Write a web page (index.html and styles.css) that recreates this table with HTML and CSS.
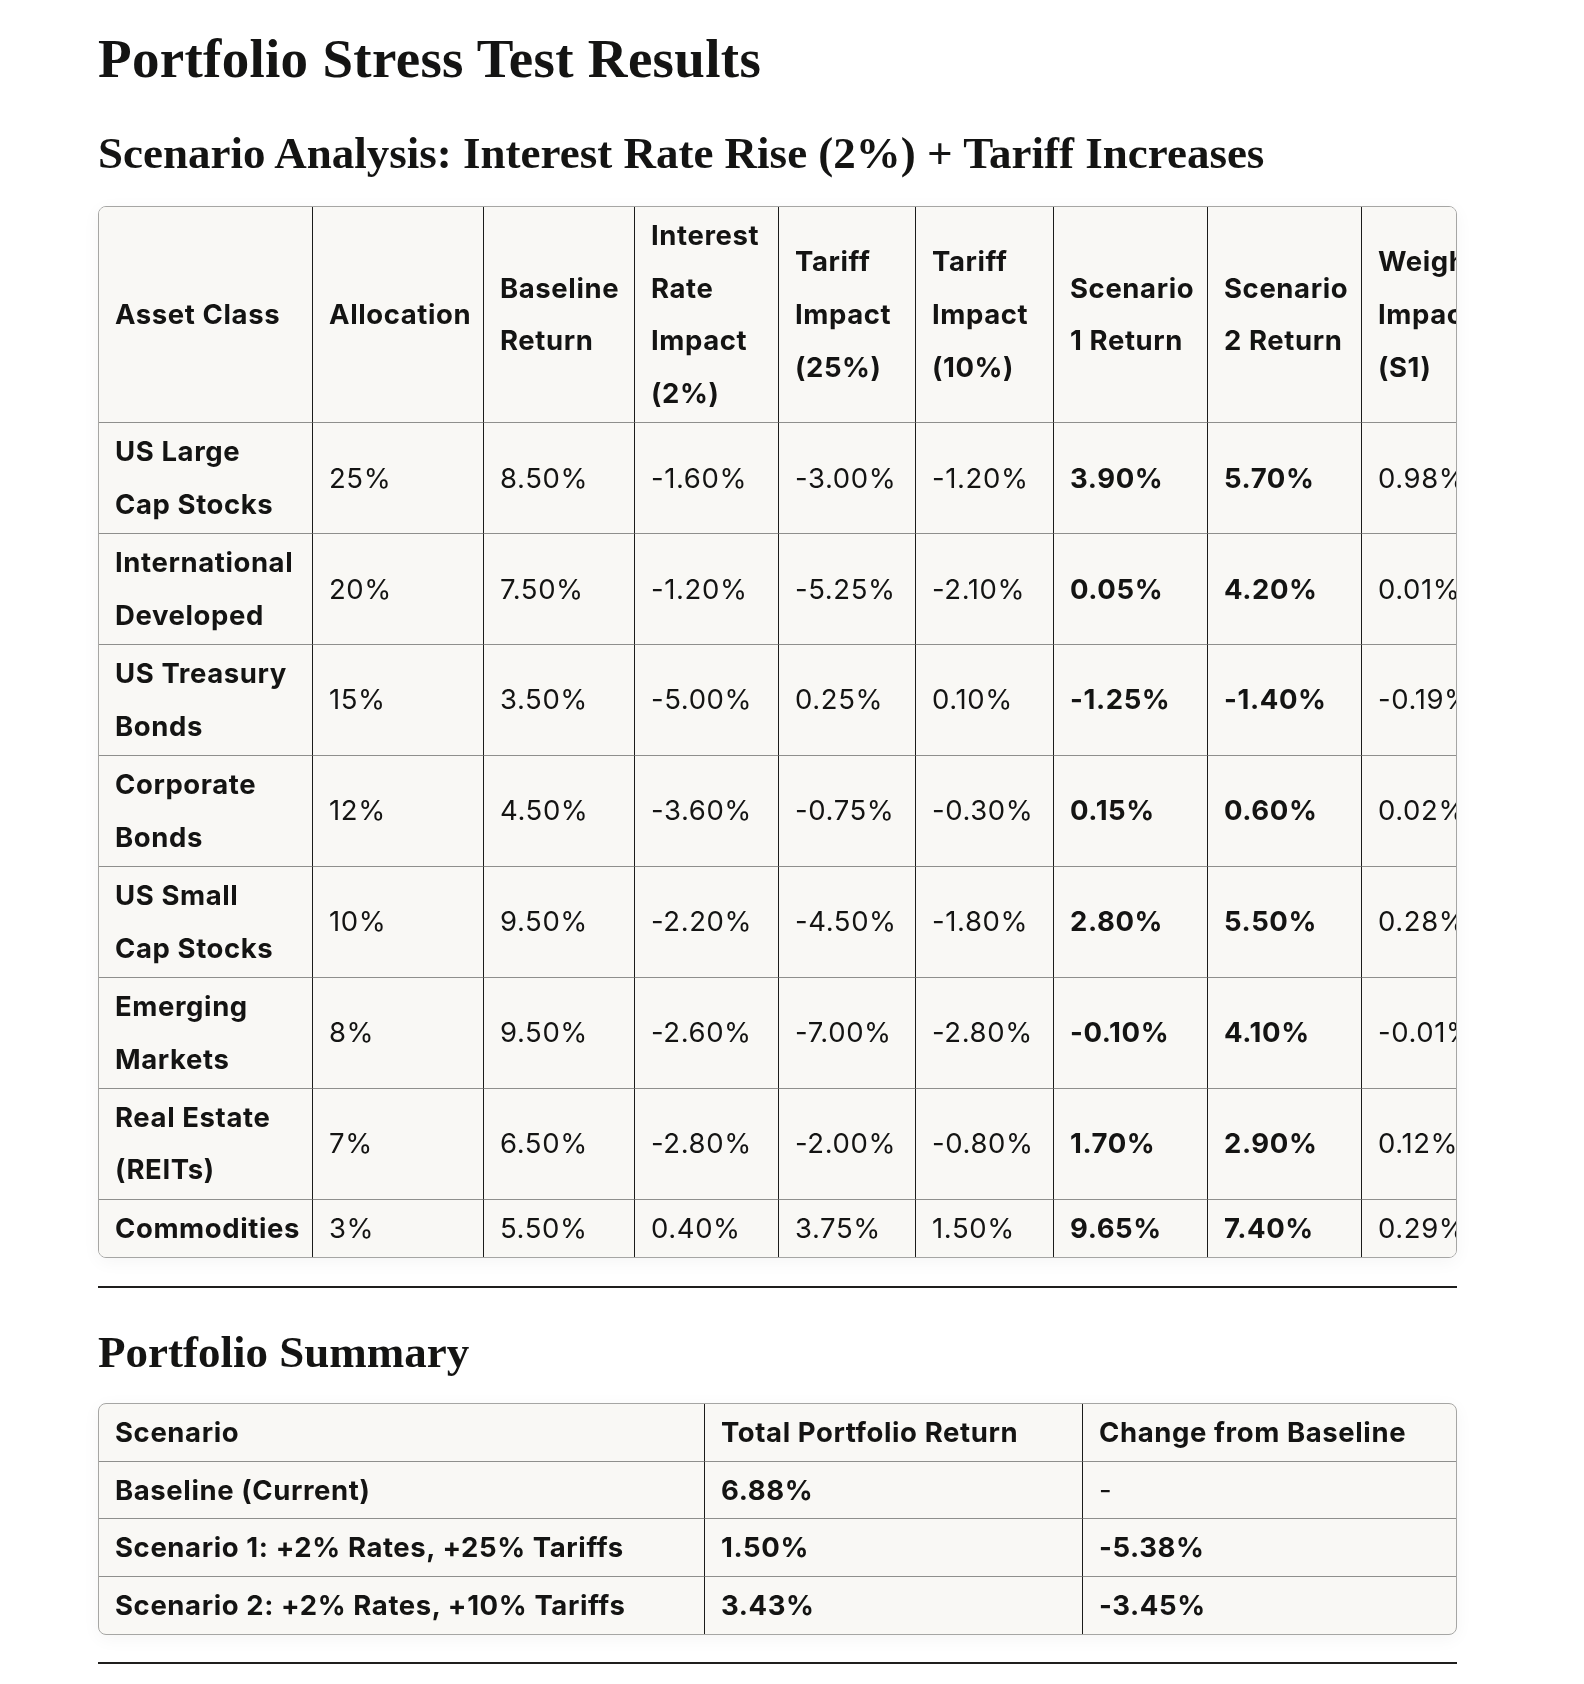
FILE: index.html
```html
<!DOCTYPE html>
<html lang="en">
<head>
<meta charset="utf-8">
<title>Portfolio Stress Test Results</title>
<link rel="stylesheet" href="styles.css">
</head>
<body>
<main class="doc">
  <h1 class="title">Portfolio Stress Test Results</h1>
  <h2 class="section">Scenario Analysis: Interest Rate Rise (2%) + Tariff Increases</h2>
  <div class="table-wrap">
    <table class="grid grid-wide">
      <thead>
        <tr>
          <th class="w-asset">Asset Class</th>
          <th class="w-alloc">Allocation</th>
          <th class="w-base">Baseline<br>Return</th>
          <th class="w-rate">Interest<br>Rate<br>Impact<br>(2%)</th>
          <th class="w-t25">Tariff<br>Impact<br>(25%)</th>
          <th class="w-t10">Tariff<br>Impact<br>(10%)</th>
          <th class="w-s1">Scenario<br>1 Return</th>
          <th class="w-s2">Scenario<br>2 Return</th>
          <th class="w-ws1">Weighted<br>Impact<br>(S1)</th>
          <th class="w-ws2">Weighted<br>Impact<br>(S2)</th>
        </tr>
      </thead>
      <tbody>
        <tr><td class="b">US Large<br>Cap Stocks</td><td>25%</td><td>8.50%</td><td>-1.60%</td><td>-3.00%</td><td>-1.20%</td><td class="b">3.90%</td><td class="b">5.70%</td><td>0.98%</td><td>1.43%</td></tr>
        <tr><td class="b">International<br>Developed</td><td>20%</td><td>7.50%</td><td>-1.20%</td><td>-5.25%</td><td>-2.10%</td><td class="b">0.05%</td><td class="b">4.20%</td><td>0.01%</td><td>0.84%</td></tr>
        <tr><td class="b">US Treasury<br>Bonds</td><td>15%</td><td>3.50%</td><td>-5.00%</td><td>0.25%</td><td>0.10%</td><td class="b">-1.25%</td><td class="b">-1.40%</td><td>-0.19%</td><td>-0.21%</td></tr>
        <tr><td class="b">Corporate<br>Bonds</td><td>12%</td><td>4.50%</td><td>-3.60%</td><td>-0.75%</td><td>-0.30%</td><td class="b">0.15%</td><td class="b">0.60%</td><td>0.02%</td><td>0.07%</td></tr>
        <tr><td class="b">US Small<br>Cap Stocks</td><td>10%</td><td>9.50%</td><td>-2.20%</td><td>-4.50%</td><td>-1.80%</td><td class="b">2.80%</td><td class="b">5.50%</td><td>0.28%</td><td>0.55%</td></tr>
        <tr><td class="b">Emerging<br>Markets</td><td>8%</td><td>9.50%</td><td>-2.60%</td><td>-7.00%</td><td>-2.80%</td><td class="b">-0.10%</td><td class="b">4.10%</td><td>-0.01%</td><td>0.33%</td></tr>
        <tr><td class="b">Real Estate<br>(REITs)</td><td>7%</td><td>6.50%</td><td>-2.80%</td><td>-2.00%</td><td>-0.80%</td><td class="b">1.70%</td><td class="b">2.90%</td><td>0.12%</td><td>0.20%</td></tr>
        <tr><td class="b">Commodities</td><td>3%</td><td>5.50%</td><td>0.40%</td><td>3.75%</td><td>1.50%</td><td class="b">9.65%</td><td class="b">7.40%</td><td>0.29%</td><td>0.22%</td></tr>
      </tbody>
    </table>
  </div>

  <hr class="rule">

  <h2 class="section section-after-rule">Portfolio Summary</h2>
  <div class="table-wrap">
    <table class="grid grid-summary">
      <thead>
        <tr>
          <th class="w-scn">Scenario</th>
          <th class="w-tot">Total Portfolio Return</th>
          <th class="w-chg">Change from Baseline</th>
        </tr>
      </thead>
      <tbody>
        <tr><td class="b">Baseline (Current)</td><td class="b">6.88%</td><td>-</td></tr>
        <tr><td class="b">Scenario 1: +2% Rates, +25% Tariffs</td><td class="b">1.50%</td><td class="b">-5.38%</td></tr>
        <tr><td class="b">Scenario 2: +2% Rates, +10% Tariffs</td><td class="b">3.43%</td><td class="b">-3.45%</td></tr>
      </tbody>
    </table>
  </div>

  <hr class="rule rule-end">
</main>
</body>
</html>
```

FILE: styles.css
```css
html, body {
  margin: 0;
  padding: 0;
  background: #ffffff;
}

body {
  color: #141413;
  font-family: "Inter", "Liberation Sans", sans-serif;
}

.doc {
  padding: 27px 0 40px 98px;
  width: 1359px;
}

.title {
  margin: 0;
  font-family: "Liberation Serif", "Times New Roman", serif;
  font-weight: 700;
  font-size: 55px;
  line-height: 64px;
  letter-spacing: 0.3px;
}

.section {
  margin: 34px 0 25px;
  font-family: "Liberation Serif", "Times New Roman", serif;
  font-weight: 700;
  font-size: 45px;
  line-height: 56px;
}

.section-after-rule {
  margin-top: 36px;
  margin-bottom: 23px;
}

.table-wrap {
  border: 1px solid #a6a6a4;
  border-radius: 8px;
  background: #f9f8f5;
  overflow-x: auto;
  scrollbar-width: none;
  box-shadow: 0 4px 18px rgba(0, 0, 0, 0.045);
}

.table-wrap::-webkit-scrollbar {
  display: none;
}

.grid {
  border-collapse: separate;
  border-spacing: 0;
  table-layout: fixed;
  font-size: 27.5px;
  line-height: 52.7px;
  letter-spacing: 0.6px;
}

.grid th,
.grid td {
  box-sizing: border-box;
  padding: 2px 16px 2.5px;
  text-align: left;
  vertical-align: middle;
  white-space: nowrap;
  overflow: hidden;
  font-weight: 400;
  border-right: 1px solid #1c1c1b;
  border-bottom: 1px solid #8f8f8d;
}

.grid th {
  font-weight: 700;
}

.grid .b {
  font-weight: 700;
}

.grid tbody tr:last-child td {
  border-bottom: none;
}

.grid th:last-child,
.grid td:last-child {
  border-right: none;
}

.grid-wide {
  width: 1563px;
}

.w-asset { width: 214px; }
.w-alloc { width: 171px; }
.w-base  { width: 151px; }
.w-rate  { width: 144px; }
.w-t25   { width: 137px; }
.w-t10   { width: 138px; }
.w-s1    { width: 154px; }
.w-s2    { width: 154px; }
.w-ws1   { width: 150px; }
.w-ws2   { width: 150px; }

.grid-summary {
  width: 100%;
  line-height: 52.5px;
}

.grid-summary th,
.grid-summary td {
  padding: 2px 16px 2.2px;
}

.w-scn { width: 606px; }
.w-tot { width: 378px; }
.w-chg { width: auto; }

.rule {
  margin: 28px 0 0;
  border: none;
  height: 2px;
  background: #1f1e1d;
}

.rule-end {
  margin-top: 27px;
}
```
